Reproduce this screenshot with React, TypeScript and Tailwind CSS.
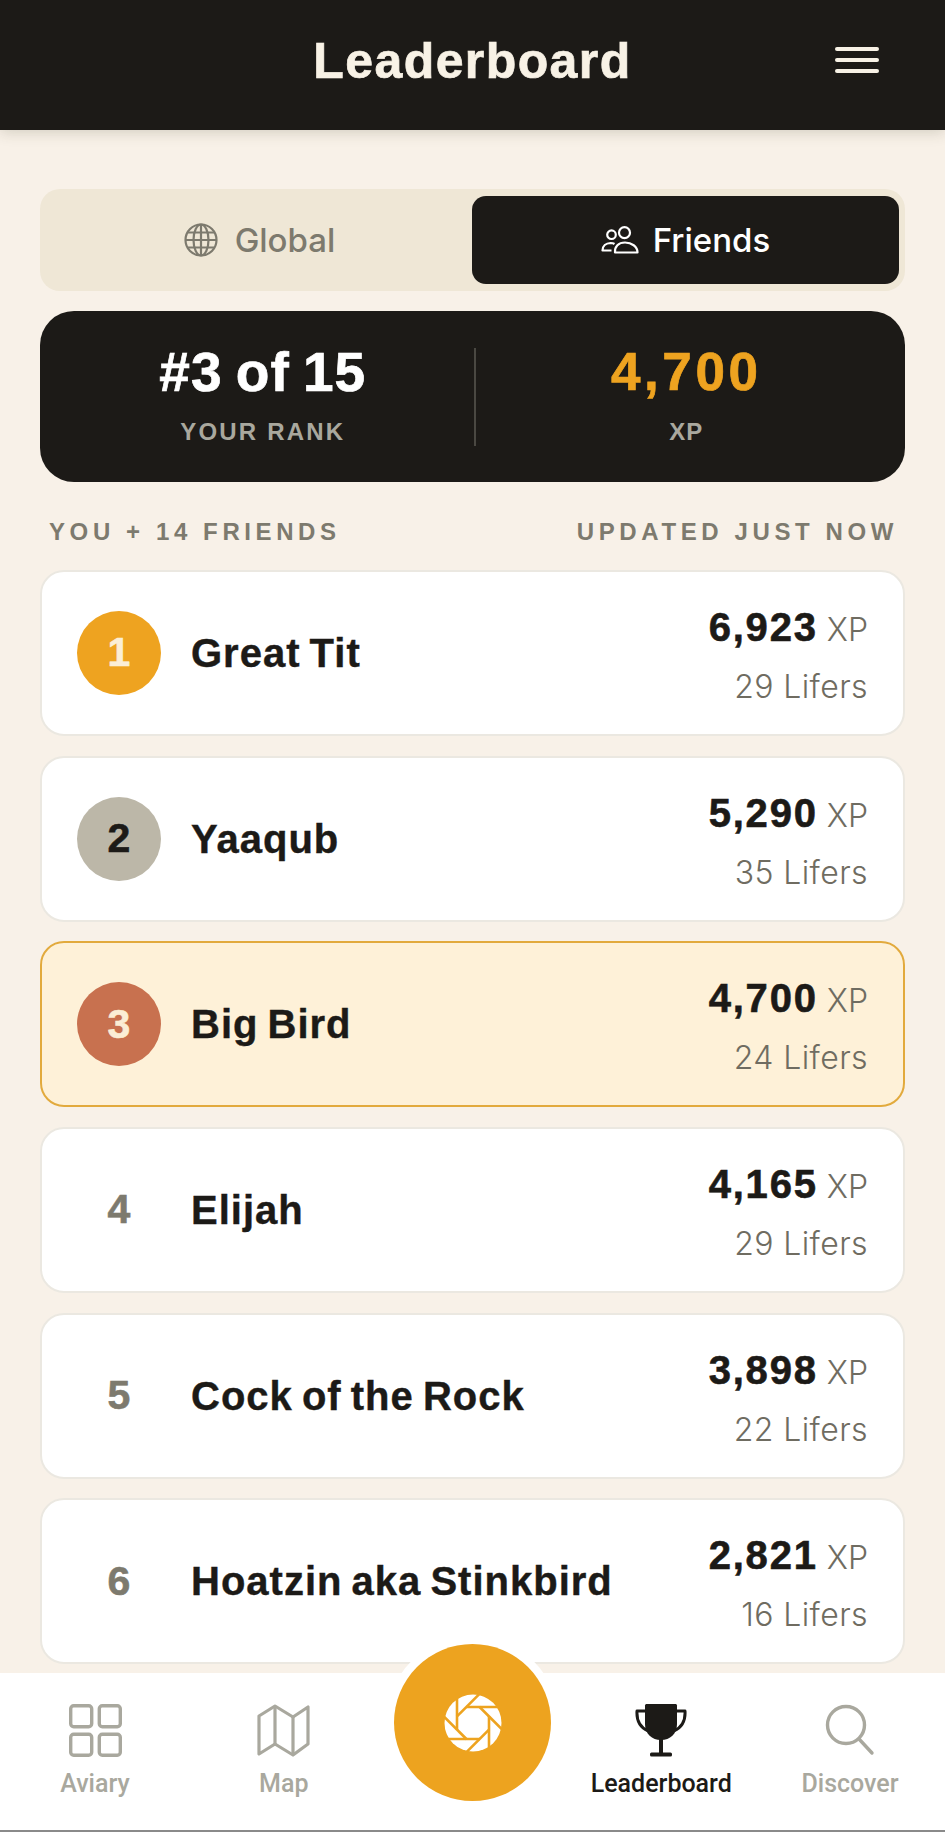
const HEAD = "font-['Liberation_Sans',Arial,sans-serif]";
const BODY = "font-['Inter','Liberation_Sans',sans-serif]";
const NAV = "font-['Roboto','Liberation_Sans',sans-serif]";

interface Player {
  rank: number;
  name: string;
  xp: string;
  lifers: number;
}

const PLAYERS: Player[] = [
  { rank: 1, name: "Great Tit", xp: "6,923", lifers: 29 },
  { rank: 2, name: "Yaaqub", xp: "5,290", lifers: 35 },
  { rank: 3, name: "Big Bird", xp: "4,700", lifers: 24 },
  { rank: 4, name: "Elijah", xp: "4,165", lifers: 29 },
  { rank: 5, name: "Cock of the Rock", xp: "3,898", lifers: 22 },
  { rank: 6, name: "Hoatzin aka Stinkbird", xp: "2,821", lifers: 16 },
];

function GlobeIcon() {
  return (
    <svg width="36" height="36" viewBox="0 0 36 36" fill="none" stroke="#7d7a6e" strokeWidth="2.2">
      <circle cx="18" cy="18" r="15.5" />
      <ellipse cx="18" cy="18" rx="7.5" ry="15.5" />
      <path d="M18 2.5v31M2.5 18h31M5 10.500h26M5 25.500h26" />
    </svg>
  );
}

function FriendsIcon() {
  return (
    <svg width="38" height="28" viewBox="0 0 38 28" fill="none" stroke="#fff" strokeWidth="2.2" strokeLinejoin="round">
      <circle cx="10.500" cy="8.700" r="4.300" />
      <circle cx="23.500" cy="6.700" r="5.500" />
      <path d="M14 26.500C13.500 20.500 17.500 16.500 24 16.500C30.500 16.500 36.500 20.500 36.500 26.500Z" />
      <path d="M10.500 24.500H1.500C1.500 20 5 17.200 9.500 17C11 17 12.500 17.300 13.500 18" />
    </svg>
  );
}

function GridIcon() {
  return (
    <svg width="53" height="53" viewBox="0 0 53 53" fill="none" stroke="#a9a89e" strokeWidth="3.400">
      <rect x="1.700" y="1.700" width="21" height="21" rx="3" />
      <rect x="30.300" y="1.700" width="21" height="21" rx="3" />
      <rect x="1.700" y="30.300" width="21" height="21" rx="3" />
      <rect x="30.300" y="30.300" width="21" height="21" rx="3" />
    </svg>
  );
}

function MapGlyph() {
  return (
    <svg width="53" height="53" viewBox="0 0 53 53" fill="none" stroke="#a9a89e" strokeWidth="3.200" strokeLinejoin="round">
      <path d="M2 12L18 2L36 13L51 3V40L36 51L18 40L2 50Z" />
      <path d="M18 2V40M36 13V51" />
    </svg>
  );
}

function SearchGlyph() {
  return (
    <svg width="50" height="52" viewBox="0 0 50 52" fill="none" stroke="#a9a89e" strokeWidth="3.400" strokeLinecap="round">
      <circle cx="21" cy="21" r="18.500" />
      <path d="M34 35L47 49" />
    </svg>
  );
}

function TrophyIcon() {
  return (
    <svg width="52" height="53" viewBox="0 0 52 53" fill="#1c1a17">
      <path d="M10 1.500C10 .6 10.800 0 11.500 0H40.500C41.300 0 42 .6 42 1.500V20C42 30 35 36 26 36C17 36 10 30 10 20Z" />
      <path d="M11 7H2C1.500 15 4 23 13 27" fill="none" stroke="#1c1a17" strokeWidth="3" strokeLinejoin="round" />
      <path d="M41 7H50C50.500 15 48 23 39 27" fill="none" stroke="#1c1a17" strokeWidth="3" strokeLinejoin="round" />
      <rect x="24" y="35" width="4" height="14" />
      <rect x="15" y="48.500" width="22" height="4" rx="1.500" />
    </svg>
  );
}

// aperture: white disc split by eight cuts tangent to the octagonal hub
function ApertureIcon() {
  const cuts = [0, 45, 90, 135, 180, 225, 270, 315];
  return (
    <svg width="58" height="58" viewBox="0 0 58 58">
      <circle cx="29" cy="29" r="28.500" fill="#fff" />
      {cuts.map((a) => (
        <line
          key={a}
          x1="22"
          y1="13"
          x2="58"
          y2="13"
          stroke="#eda31f"
          strokeWidth="2.600"
          transform={`rotate(${a} 29 29)`}
        />
      ))}
    </svg>
  );
}

function RankBadge({ rank }: { rank: number }) {
  const base = "w-[84px] h-[84px] flex items-center justify-center text-[41px] font-bold [-webkit-text-stroke:0.6px]";
  if (rank === 1) return <div className={`${base} rounded-full bg-[#eea320] text-[#fbeed5]`}>1</div>;
  if (rank === 2) return <div className={`${base} rounded-full bg-[#bcb7a8] text-[#1c1a17]`}>2</div>;
  if (rank === 3) return <div className={`${base} rounded-full bg-[#c8714f] text-[#fbeed5]`}>3</div>;
  return <div className={`${base} text-[#7d7a6e]`}>{rank}</div>;
}

function PlayerRow({ player }: { player: Player }) {
  const isMe = player.rank === 3;
  return (
    <div
      className={`h-[166px] shrink-0 rounded-[24px] flex items-center pl-[35px] pr-[35px] border-2 ${
        isMe ? "bg-[#fef1d8] border-[#e2aa3d]" : "bg-white border-[#ebe8e1]"
      }`}
    >
      <RankBadge rank={player.rank} />
      <span className="ml-[30px] text-[40px] font-bold text-[#1c1a17] tracking-[1px] [word-spacing:-3px] [-webkit-text-stroke:0.4px]">
        {player.name}
      </span>
      <div className="ml-auto pt-[8px] flex flex-col items-end gap-[11px]">
        <div className="flex items-baseline leading-[46px]">
          <span className="text-[40px] font-bold text-[#1c1a17] tracking-[1.8px] [-webkit-text-stroke:0.6px]">{player.xp}</span>
          <span className={`${BODY} ml-[9px] text-[32px] font-light text-[#6f6c61]`}>XP</span>
        </div>
        <span className={`${BODY} text-[32px] leading-[46px] font-light tracking-[0.4px] text-[#6f6c61]`}>{player.lifers} Lifers</span>
      </div>
    </div>
  );
}

function NavItem({ icon, label, active = false }: { icon: React.ReactNode; label: string; active?: boolean }) {
  return (
    <div className="w-[150px] flex flex-col items-center">
      <div className="h-[54px] flex items-center justify-center">{icon}</div>
      <span className={`${NAV} mt-[9px] text-[25px] leading-[36px] font-medium ${active ? "text-[#1c1a17]" : "text-[#a9a89e]"}`}>
        {label}
      </span>
    </div>
  );
}

export default function App() {
  return (
    <div className={`${HEAD} relative h-[1832px] overflow-hidden bg-[#f8f1e8] flex flex-col`}>
      {/* Header */}
      <div className="relative h-[130px] shrink-0 bg-[#1c1a17] flex items-center justify-center shadow-[0_2px_14px_rgba(60,60,30,0.2)]">
        <h1 className="text-[50px] font-bold text-[#f8f2e6] -mt-[8px] tracking-[1.4px] [-webkit-text-stroke:0.7px]">Leaderboard</h1>
        <div className="absolute right-[66px] top-[47px] w-[44px] flex flex-col gap-[7px]">
          <div className="h-[4px] bg-[#f8f2e6] rounded-sm" />
          <div className="h-[4px] bg-[#f8f2e6] rounded-sm" />
          <div className="h-[4px] bg-[#f8f2e6] rounded-sm" />
        </div>
      </div>

      <div className="flex-1 min-h-0 overflow-hidden px-[40px] pt-[59px]">
        {/* Tabs */}
        <div className="h-[102px] rounded-[20px] bg-[#efe7d6] flex items-center p-[6px]">
          <div className="flex-1 flex items-center justify-center gap-[16px]">
            <GlobeIcon />
            <span className={`${BODY} mt-[1px] text-[33px] font-medium text-[#7d7a6e]`}>Global</span>
          </div>
          <div className="w-[427px] h-[88px] rounded-[14px] bg-[#1c1a17] flex items-center justify-center gap-[14px]">
            <FriendsIcon />
            <span className={`${BODY} mt-[1px] text-[33px] font-medium text-white`}>Friends</span>
          </div>
        </div>

        {/* Rank summary */}
        <div className="mt-[20px] h-[171px] rounded-[34px] bg-[#1c1a17] flex items-center">
          <div className="flex-1 pl-[12px] flex flex-col items-center">
            <span className="-mt-[5px] text-[55px] leading-[60px] font-bold text-white tracking-[1px] [word-spacing:-3px] [-webkit-text-stroke:0.7px]">#3 of 15</span>
            <span className="mt-[15px] text-[24px] leading-[30px] font-bold tracking-[2.2px] text-[#a9a89e]">YOUR RANK</span>
          </div>
          <div className="w-[2px] h-[98px] bg-[#4a4842]" />
          <div className="flex-1 pr-[8px] flex flex-col items-center">
            <span className="-mt-[5px] text-[53px] leading-[60px] font-bold text-[#eea320] tracking-[3.6px] [-webkit-text-stroke:0.7px]">4,700</span>
            <span className="mt-[15px] text-[24px] leading-[30px] font-bold tracking-[1px] text-[#a9a89e]">XP</span>
          </div>
        </div>

        {/* Section labels */}
        <div className="mt-[35px] flex justify-between pl-[9px] pr-[7px] text-[24px] leading-[30px] font-bold tracking-[4.6px] text-[#7d7a6e]">
          <span>YOU + 14 FRIENDS</span>
          <span>UPDATED JUST NOW</span>
        </div>

        {/* Rows */}
        <div className="mt-[23px] flex flex-col gap-[19.7px]">
          {PLAYERS.map((p) => (
            <PlayerRow key={p.rank} player={p} />
          ))}
        </div>
      </div>

      {/* Bottom nav */}
      <div className="h-[159px] shrink-0 bg-white border-b-2 border-[#8a8a8a] flex justify-between px-[20px] pt-[30px]">
        <NavItem icon={<GridIcon />} label="Aviary" />
        <NavItem icon={<MapGlyph />} label="Map" />
        <div className="w-[150px]" />
        <NavItem icon={<TrophyIcon />} label="Leaderboard" active />
        <NavItem icon={<SearchGlyph />} label="Discover" />
      </div>

      {/* Capture button */}
      <div className="absolute left-[386px] top-[1636px] w-[173px] h-[173px] rounded-full bg-white flex items-center justify-center">
        <div className="w-[157px] h-[157px] rounded-full bg-[#eda31f] flex items-center justify-center">
          <ApertureIcon />
        </div>
      </div>
    </div>
  );
}
